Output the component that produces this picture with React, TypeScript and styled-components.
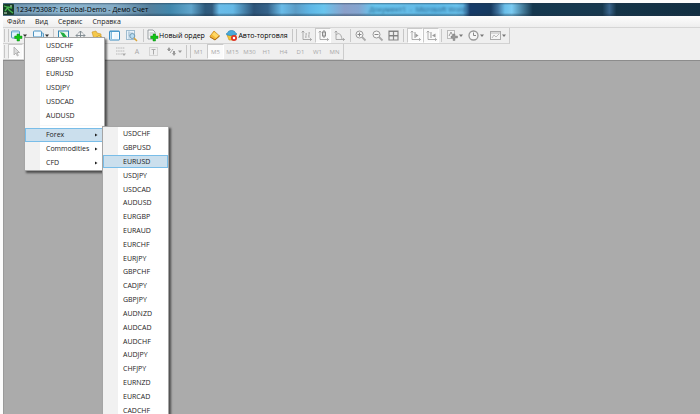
import React from 'react';
import styled, { createGlobalStyle } from 'styled-components';

const GlobalStyle = createGlobalStyle`
  * { box-sizing: border-box; }
  body {
    margin: 0;
    overflow: hidden;
    font: 7px/14px "Open Sans", "Noto Sans", sans-serif;
    color: #222;
  }
  button {
    margin: 0;
    padding: 0;
    border: 0;
    background: none;
    font: inherit;
    color: inherit;
  }
  svg { display: block; flex: none; overflow: visible; }
`;

const Window = styled.div`
  position: relative;
  display: flex;
  flex-direction: column;
  height: 100vh;
  padding: 3px 0 0 3px;
  overflow: hidden;
  background: #fcfcfc;
`;

const TitleBar = styled.header`
  display: flex;
  flex: none;
  align-items: center;
  gap: 2px;
  height: 13px;
  color: #000;
  background:
    linear-gradient(180deg, rgba(30, 50, 70, 0.5) 0, transparent 2px, transparent 10px, rgba(30, 50, 70, 0.4) 12px),
    linear-gradient(90deg, #6c92ad 0%, #8cb5cf 9%, #83abc5 16%, #55809d 21%, #4187ac 24%,
      #5fa5cc 27%, #2d5a7c 29%, #315b7e 30%, #69bce9 31%, #65b9e6 33%, #2d5478 36%, #35638a 38%,
      #69bce9 40%, #5b9cc6 42%, #5eb6e5 44%, #68c5ee 46%, #8a9fc9 49%, #84a4cf 51%, #68c5ee 53%,
      #65bde8 58%, #5ebae8 62%, #69c4ef 65%, #5fb2e0 66%, #163a68 67%, #163a60 70%, #3c6f9a 71%,
      #69bee9 72%, #7acbf2 73%, #15384f 76%, #17394f 86%, #3a658c 87%, #143448 88%, #122f42 100%);
`;

const WindowTitle = styled.h1`
  margin: 0;
  font-size: 7px;
  font-weight: 400;
  line-height: 12px;
  white-space: nowrap;
`;

const BackgroundTitle = styled.span`
  margin-left: 219px;
  color: #285f86;
  font-size: 7px;
  line-height: 12px;
  white-space: pre;
  filter: blur(1px);
`;

const MenuBar = styled.nav`
  display: flex;
  flex: none;
  gap: 10px;
  height: 12px;
  padding-left: 4px;
  border-bottom: 1px solid #d5d5d5;
  background: linear-gradient(#fdfdfd, #eeeeee);
  line-height: 11px;
`;

const Toolbars = styled.div`
  flex: none;
  background: #efefef;
  border-bottom: 1px solid #8c8c8c;
`;

const Toolbar = styled.div`
  display: flex;
  align-items: center;
  width: max-content;
  height: 16px;
  border-right: 1px solid #ccc;
  border-bottom: 1px solid #d2d2d2;
`;

const Tool = styled.button<{ $w: number; $faded?: boolean }>`
  display: flex;
  align-items: center;
  justify-content: center;
  gap: 1px;
  flex: none;
  width: ${(p) => p.$w}px;
  height: 15px;
  color: ${(p) => (p.$faded ? '#a8a8a8' : '#000')};
  white-space: nowrap;

  &[aria-pressed='true'] {
    border: 1px solid #c9c9c9;
    border-right-color: #fff;
    border-bottom-color: #fff;
    background: #fafafa;
  }
`;

const Period = styled(Tool)`
  font-size: 6px;
`;

const Grip = styled.span<{ $w: number }>`
  flex: none;
  width: ${(p) => p.$w}px;
  height: 13px;
  &::before {
    content: '';
    display: block;
    width: 3px;
    height: 13px;
    margin-left: 1px;
    border: solid #c6c6c6;
    border-width: 0 1px;
  }
`;

const Separator = styled.span<{ $w: number }>`
  flex: none;
  width: ${(p) => p.$w}px;
  height: 13px;
  background: linear-gradient(#c9c9c9, #c9c9c9) center / 1px 100% no-repeat;
`;

const Workspace = styled.main`
  flex: 1;
  background: #ababab;
  border-left: 1px solid #9a9a9a;
`;

const Popup = styled.div`
  position: absolute;
  border: 1px solid #a5a5a5;
  background: linear-gradient(90deg, #f1f1f1 14px, #f1f1f1 15px, #fff 15px);
  box-shadow: 2px 2px 2px rgba(0, 0, 0, 0.55);
`;

const SymbolMenu = styled(Popup)`
  top: 37px;
  left: 24px;
  width: 81px;
  padding-top: 1px;
`;

const SubMenu = styled(Popup)`
  top: 126px;
  left: 102px;
  width: 67px;
  display: grid;
  grid-template-rows: repeat(21, minmax(0, 1fr));
  height: 292px;
`;

const MenuItem = styled.button<{ $active?: boolean }>`
  display: flex;
  align-items: center;
  justify-content: space-between;
  width: 100%;
  height: 14px;
  padding: 0 5px 0 20px;
  line-height: 12px;
  border: 1px solid ${(p) => (p.$active ? '#79bde8' : 'transparent')};
  background: ${(p) => (p.$active ? '#cbdfed' : 'none')};

  ${SubMenu} & {
    height: auto;
    padding-left: 19px;
    line-height: 11px;
  }
`;

const MenuDivider = styled.hr`
  height: 1px;
  margin: 2px 0 2px 15px;
  border: 0;
  background: #f7f7f7;
`;

const Caret = ({ color = '#333' }: { color?: string }) => (
  <svg width="4" height="3" viewBox="0 0 4 3"><path d="M0 .5h4L2 3z" fill={color} /></svg>
);

const Arrow = () => (
  <svg width="3" height="4" viewBox="0 0 3 4"><path d="M0 .5l2.500 1.500L0 3.500z" fill="#222" /></svg>
);

const Icon = ({ children, label }: { children: React.ReactNode; label?: string }) => (
  <svg width="11" height="11" viewBox="0 0 11 11" fill="none" role={label ? 'img' : undefined} aria-label={label}>
    {children}
  </svg>
);

const Plus = () => (
  <path d="M6 4h2.500v2H11v2.500H8.500V11H6V8.500H3.700V6H6z" fill="#12c512" stroke="#078a17" strokeWidth=".5" />
);

const AppIcon = () => (
  <Icon>
    <rect width="11" height="11" rx="1" fill="#173c2a" />
    <path d="M1 2l3 1 2 3 4 3M2 7l3-4 4 1" stroke="#47b74c" strokeWidth="1.300" />
    <path d="M1 9h3M7 2h2" stroke="#d7efcf" />
  </Icon>
);
const NewChartIcon = () => (
  <Icon>
    <rect x=".5" y="1" width="8" height="7" rx="1" fill="#e4f3fc" stroke="#5596bd" />
    <path d="M1 2h7" stroke="#8dc5e4" /><Plus />
  </Icon>
);
const ProfilesIcon = () => (
  <Icon>
    <rect x="2.500" y="3" width="8" height="6" rx="1" fill="#c9e6f7" stroke="#5b9bc4" />
    <rect x=".5" y="1" width="8" height="6" rx="1" fill="#eff9ff" stroke="#4b93c2" />
  </Icon>
);
const MarketIcon = () => (
  <Icon>
    <rect x=".5" y="1" width="10" height="9" fill="#effbf1" stroke="#3384b4" />
    <path d="M2 2l4 1 3 4H5z" fill="#22ac42" />
  </Icon>
);
const DataIcon = () => (
  <Icon><path d="M5.500 1v9M1 5.500h9M3.500 3l2-2 2 2M3 3.500l-2 2 2 2M8 3.500l2 2-2 2" stroke="#7c878d" strokeWidth=".9" /></Icon>
);
const FolderIcon = () => (
  <Icon>
    <path d="M0 2l4-1 1 2 4 1v5H2z" fill="#f4c84c" stroke="#c99221" strokeWidth=".6" />
    <path d="M7 5l1 1.500 2 .4-1.500 1.500.5 2-2-1-2 1 .5-2L4 7l2-.5z" fill="#ffe263" stroke="#b98518" strokeWidth=".5" />
  </Icon>
);
const TerminalIcon = () => (
  <Icon>
    <rect x=".5" y="1" width="10" height="9" rx=".5" fill="#f9fdff" stroke="#3d8dc2" />
    <path d="M1 1.500h9M2.200 2v7" stroke="#4b9acb" /><path d="M5 4h4M5 6h4M5 8h4" stroke="#d6e7f1" strokeWidth=".5" />
  </Icon>
);
const TesterIcon = () => (
  <Icon>
    <rect x=".5" y=".5" width="8" height="9" fill="#e8f2fa" stroke="#9fbccf" />
    <path d="M2 3h5M2 5h3M3 1v8" stroke="#9bbace" strokeWidth=".7" />
    <circle cx="6.300" cy="6" r="2.500" fill="#b7dcf2" stroke="#7199b2" /><path d="M8 8l3 3" stroke="#d8a438" strokeWidth="1.500" />
  </Icon>
);
const OrderIcon = () => (
  <Icon>
    <path d="M1 0h5l2 2v7H1z" fill="#fafafa" stroke="#838b8f" strokeWidth=".8" />
    <path d="M2.500 3h4M2.500 5h2" stroke="#8d979c" strokeWidth=".7" /><Plus />
  </Icon>
);
const EditorIcon = () => (
  <Icon>
    <path d="M.8 6.500l4.200-5.500 5.500 5L6 9.800z" fill="#f4b838" stroke="#c98a22" strokeWidth=".8" />
    <path d="M3 4.500l4 3.500 2.500-2.500L5.300 2z" fill="#ffd866" /><path d="M1 7l5 3 4.500-4" stroke="#b07018" />
  </Icon>
);
const AutoIcon = () => (
  <Icon>
    <path d="M1 5l4.500-1L10 5 8 10H3z" fill="#f2c536" stroke="#c69122" strokeWidth=".6" />
    <path d="M0 4c1-1 2-1 2-2 1-2 6-2 7 0 0 1 1 1 2 2-2 2-9 2-11 0z" fill="#4aaada" stroke="#1e7bac" strokeWidth=".6" />
    <circle cx="8" cy="8" r="3" fill="#df3425" /><rect x="6.900" y="6.900" width="2.200" height="2.200" fill="#fff" />
  </Icon>
);

const axis = 'M2 1v8.500h8.500M.7 2.500L2 1l1.300 1.500M9 8.200l1.500 1.300L9 10.800';
const BarsIcon = () => <Icon><path d={axis} stroke="#999" strokeWidth=".8" /><path d="M5 3v5M4 7h1M5 4h1M8 2v6M7 6h1M8 3h1" stroke="#aaa" strokeWidth=".8" /></Icon>;
const CandlesIcon = () => <Icon><path d={axis} stroke="#999" strokeWidth=".8" /><path d="M6 0v8" stroke="#888" /><rect x="4.500" y="2" width="3" height="4" fill="#ddd" stroke="#888" /></Icon>;
const LineIcon = () => <Icon><path d={axis} stroke="#999" strokeWidth=".8" /><path d="M2 5c3-3 5-1 6 4" stroke="#aaa" /></Icon>;
const ScrollIcon = () => <Icon><path d={axis} stroke="#999" strokeWidth=".8" /><path d="M5 2v6" stroke="#999" /><path d="M5.500 3.500L8.500 5.500l-3 2z" fill="#999" /></Icon>;
const ShiftIcon = () => <Icon><path d={axis} stroke="#999" strokeWidth=".8" /><path d="M5 2v6" stroke="#999" /><path d="M9.500 3.500L6 5.500l3.500 2z" fill="#999" /></Icon>;
const ZoomIcon = ({ plus = false }: { plus?: boolean }) => (
  <Icon><circle cx="4.500" cy="4.500" r="3.500" fill="#f8f8f8" stroke="#999" /><path d={plus ? 'M2.500 4.500h4M4.500 2.500v4' : 'M2.500 4.500h4'} stroke="#888" /><path d="M7 7l3.500 3.500" stroke="#aaa" strokeWidth="1.800" /></Icon>
);
const TileIcon = () => <Icon><path d="M1 1h9v9H1zM5.500 1v9M1 5.500h9" stroke="#888" strokeWidth="1.200" /><path d="M1 1.500h9M1 6h9" stroke="#777" strokeWidth=".8" /></Icon>;
const IndicatorIcon = () => (
  <Icon><rect x=".5" y=".5" width="7" height="8" fill="#f5f5f5" stroke="#bbb" /><path d="M2 6l2-4 2 4" stroke="#999" /><path d="M6 4h2v2h2.500v2H8v2.500H6V8H4V6h2z" fill="#999" stroke="#777" strokeWidth=".4" /></Icon>
);
const ClockIcon = () => <Icon><circle cx="5.500" cy="5.500" r="4.500" fill="#f7f7f7" stroke="#999" strokeWidth="1.300" /><path d="M5.500 2.500v3H8" stroke="#888" /></Icon>;
const TemplateIcon = () => <Icon><rect x=".5" y="1.500" width="10" height="8" fill="#f5f5f5" stroke="#aaa" /><path d="M1 3h9M2 8l2-3 2 2 3-3" stroke="#bbb" /></Icon>;
const CursorIcon = () => <Icon><path d="M4 1v8l2-2 1.300 3 1-.5L7 6.500h2.500z" fill="#ddd" stroke="#aaa" strokeWidth=".8" /></Icon>;
const FiboIcon = () => <Icon><path d="M1 2h9M1 5h9M1 8h6" stroke="#aaa" strokeWidth=".8" strokeDasharray="1.500 .7" /><path d="M7 7.500h4L9 10z" fill="#aaa" /></Icon>;
const LabelIcon = () => <Icon><rect x="1.500" y="1.500" width="8" height="8" stroke="#bbb" strokeDasharray="1 1" /><path d="M3.500 3.500h4M5.500 3.500v5" stroke="#aaa" /></Icon>;
const ArrowsIcon = () => <Icon><path d="M1 4l2-3 2 3H4v1H2V4zM6 7h1V5h2v2h1L8 10z" fill="#999" /><path d="M4 7l3-4" stroke="#aaa" /></Icon>;

const favourites = ['USDCHF', 'GBPUSD', 'EURUSD', 'USDJPY', 'USDCAD', 'AUDUSD'];
const groups = ['Forex', 'Commodities', 'CFD'];
const forex = [
  'USDCHF', 'GBPUSD', 'EURUSD', 'USDJPY', 'USDCAD', 'AUDUSD', 'EURGBP', 'EURAUD', 'EURCHF', 'EURJPY', 'GBPCHF',
  'CADJPY', 'GBPJPY', 'AUDNZD', 'AUDCAD', 'AUDCHF', 'AUDJPY', 'CHFJPY', 'EURNZD', 'EURCAD', 'CADCHF',
];
const periods = ['M1', 'M5', 'M15', 'M30', 'H1', 'H4', 'D1', 'W1', 'MN'];

export default function App() {
  return (
    <>
      <GlobalStyle />
      <Window>
        <TitleBar>
          <AppIcon />
          <WindowTitle>1234753087: EGlobal-Demo - Демо Счет</WindowTitle>
          <BackgroundTitle>Документ1  -  Microsoft Word</BackgroundTitle>
        </TitleBar>
        <MenuBar>
          {['Файл', 'Вид', 'Сервис', 'Справка'].map((name) => <button key={name}>{name}</button>)}
        </MenuBar>
        <Toolbars>
          <Toolbar>
            <Grip $w={5} />
            <Tool $w={22} aria-label="New chart"><NewChartIcon /><Caret /></Tool>
            <Tool $w={22} aria-label="Profiles"><ProfilesIcon /><Caret /></Tool>
            <Separator $w={3} />
            <Tool $w={17} aria-label="Market watch"><MarketIcon /></Tool>
            <Tool $w={17} aria-label="Data window"><DataIcon /></Tool>
            <Tool $w={17} aria-label="Navigator"><FolderIcon /></Tool>
            <Tool $w={17} aria-label="Terminal"><TerminalIcon /></Tool>
            <Tool $w={17} aria-label="Strategy tester"><TesterIcon /></Tool>
            <Separator $w={6} />
            <Tool $w={60}><OrderIcon />Новый ордер</Tool>
            <Tool $w={17} aria-label="Editor"><EditorIcon /></Tool>
            <Tool $w={68}><AutoIcon />Авто-торговля</Tool>
            <Grip $w={7} />
            <Tool $w={17} aria-label="Bar chart"><BarsIcon /></Tool>
            <Tool $w={16} aria-label="Candlesticks" aria-pressed="true"><CandlesIcon /></Tool>
            <Tool $w={17} aria-label="Line chart"><LineIcon /></Tool>
            <Separator $w={4} />
            <Tool $w={17} aria-label="Zoom in"><ZoomIcon plus /></Tool>
            <Tool $w={16} aria-label="Zoom out"><ZoomIcon /></Tool>
            <Tool $w={17} aria-label="Tile windows"><TileIcon /></Tool>
            <Grip $w={5} />
            <Tool $w={16} aria-label="Auto scroll" aria-pressed="true"><ScrollIcon /></Tool>
            <Tool $w={16} aria-label="Chart shift" aria-pressed="true"><ShiftIcon /></Tool>
            <Separator $w={5} />
            <Tool $w={21} aria-label="Indicators"><IndicatorIcon /><Caret color="#777" /></Tool>
            <Tool $w={22} aria-label="Periods"><ClockIcon /><Caret color="#777" /></Tool>
            <Tool $w={22} aria-label="Templates"><TemplateIcon /><Caret color="#777" /></Tool>
          </Toolbar>
          <Toolbar>
            <Grip $w={5} />
            <Tool $w={15} aria-label="Cursor" aria-pressed="true"><CursorIcon /></Tool>
            <Separator $w={89} />
            <Tool $w={17} aria-label="Fibonacci"><FiboIcon /></Tool>
            <Tool $w={16} $faded>A</Tool>
            <Tool $w={17} aria-label="Text label"><LabelIcon /></Tool>
            <Tool $w={23} aria-label="Arrows"><ArrowsIcon /><Caret color="#999" /></Tool>
            <Grip $w={5} />
            {periods.map((p) => <Period key={p} $w={17} $faded aria-pressed={p === 'M5'}>{p}</Period>)}
          </Toolbar>
        </Toolbars>
        <Workspace />
        <SymbolMenu role="menu">
          {favourites.map((s) => <MenuItem key={s} role="menuitem">{s}</MenuItem>)}
          <MenuDivider />
          {groups.map((g) => (
            <MenuItem key={g} role="menuitem" $active={g === 'Forex'}>{g}<Arrow /></MenuItem>
          ))}
        </SymbolMenu>
        <SubMenu role="menu">
          {forex.map((s, i) => <MenuItem key={s} role="menuitem" $active={i === 2}>{s}</MenuItem>)}
        </SubMenu>
      </Window>
    </>
  );
}
